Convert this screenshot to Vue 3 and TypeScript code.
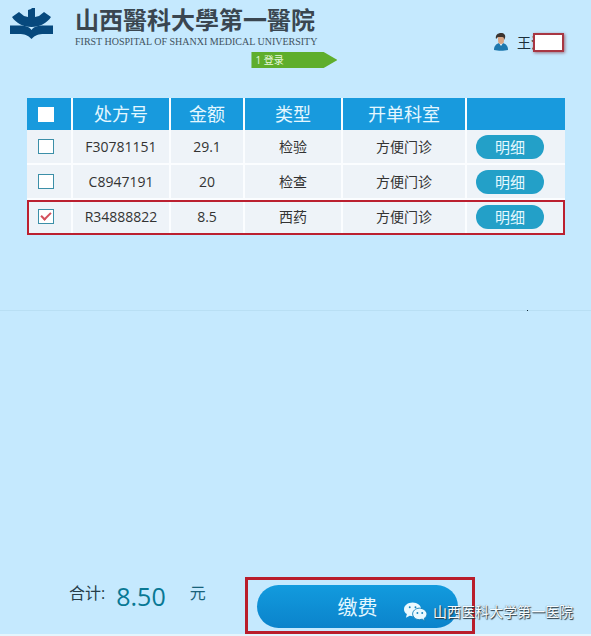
<script setup lang="ts">
import { computed, ref } from 'vue'

interface Prescription {
  id: string
  amount: number
  kind: string
  department: string
  selected: boolean
}

const items = ref<Prescription[]>([
  { id: 'F30781151', amount: 29.1, kind: '检验', department: '方便门诊', selected: false },
  { id: 'C8947191', amount: 20, kind: '检查', department: '方便门诊', selected: false },
  { id: 'R34888822', amount: 8.5, kind: '西药', department: '方便门诊', selected: true },
])

const total = computed(() =>
  items.value.filter((i) => i.selected).reduce((sum, i) => sum + i.amount, 0).toFixed(2),
)

const allSelected = computed({
  get: () => items.value.every((i) => i.selected),
  set: (value: boolean) => items.value.forEach((i) => (i.selected = value)),
})
</script>

<template>
  <div class="page">
    <header class="top">
      <svg class="logo" viewBox="0 0 44 32" aria-hidden="true">
        <path d="M18 2l3-1 1-1 3 0v9l4-1 5-4 7 5c-4 6-11 10-19.500 10S6 15 2 9l7-5 5 4 4 1z" />
        <path d="M0 17.500h9c6 0 10 1 12.500 4.500 2.500-3.500 6.500-4.500 12.500-4.500h9V26h-9c-5 0-9 1-12.500 5-3.500-4-7.500-5-12.500-5H0z" />
      </svg>
      <div class="brand">
        <h1 class="name">山西醫科大學第一醫院</h1>
        <p class="english">FIRST HOSPITAL OF SHANXI MEDICAL UNIVERSITY</p>
        <div class="step">1 登录</div>
      </div>
      <div class="user">
        <svg class="avatar" viewBox="0 0 16 18" aria-hidden="true">
          <path class="coat" d="M1 17c0-4 2-6 5-7h4c3 1 5 3 5 7-4 1-10 1-14 0z" />
          <path class="shirt" d="M6 10l2 3 2-3z" />
          <path class="face" d="M5 3h6v4c0 3-1 4-3 4s-3-1-3-4z" />
          <path class="hair" d="M3 6C2 2 5 0 8 0s5 2 4 5l-1 2c0-2 0-3-2-3L5 4z" />
        </svg>
        <span class="person">王洪</span>
        <span class="mask"></span>
      </div>
    </header>

    <main class="list">
      <table>
        <colgroup>
          <col class="c-check" />
          <col class="c-id" />
          <col class="c-amount" />
          <col class="c-kind" />
          <col class="c-dept" />
          <col class="c-action" />
        </colgroup>
        <thead>
          <tr>
            <th><input v-model="allSelected" type="checkbox" aria-label="全选" /></th>
            <th>处方号</th>
            <th>金额</th>
            <th>类型</th>
            <th>开单科室</th>
            <th></th>
          </tr>
        </thead>
        <tbody>
          <tr v-for="item in items" :key="item.id" :class="{ chosen: item.selected }">
            <td><input v-model="item.selected" type="checkbox" :aria-label="item.id" /></td>
            <td>{{ item.id }}</td>
            <td>{{ item.amount }}</td>
            <td>{{ item.kind }}</td>
            <td>{{ item.department }}</td>
            <td class="action"><button type="button" class="detail">明细</button></td>
          </tr>
        </tbody>
      </table>
    </main>

    <footer class="bottom">
      <div class="total">
        <span class="label">合计:</span>
        <output class="sum">{{ total }}</output>
        <span class="unit">元</span>
      </div>
      <div class="pay-frame">
        <button type="button" class="pay">缴费</button>
      </div>
      <div class="account">
        <svg class="wechat" viewBox="0 0 24 20" aria-hidden="true">
          <path d="M9 0C4 0 0 3 0 7c0 2 1 4 3 5l-1 4 4-2 3 .5c5 0 9-3 9-7.200S14 0 9 0z" />
          <path class="front" d="M16 6c-4 0-7 3-7 6s3 6 7 6l3-.5 3 2-.8-3c2-1 2.800-3 2.800-4.500 0-3-4-6-8-6z" />
          <circle cx="6" cy="5" r="1" />
          <circle cx="12" cy="5" r="1" />
          <circle cx="14" cy="11" r="1" />
          <circle cx="19" cy="11" r="1" />
        </svg>
        <span>山西医科大学第一医院</span>
      </div>
    </footer>
  </div>
</template>

<style>
body {
  margin: 0;
  background: #c5e9fe;
}
</style>

<style scoped>
.page {
  box-sizing: border-box;
  display: flex;
  flex-direction: column;
  min-height: 100vh;
  border-bottom: 2px solid #e4f5fd;
  background:
    linear-gradient(#102a38, #102a38) 527px 310px / 1px 1px no-repeat,
    linear-gradient(#b9dff4, #b9dff4) 0 310px / 100% 1px no-repeat,
    #c5e9fe;
  color: #333;
  font-family: "Open Sans", "Noto Sans CJK SC", sans-serif;
  font-size: 14px;
}

.top {
  display: flex;
  align-items: flex-start;
  height: 98px;
  padding: 0 27px 0 10px;
  box-sizing: border-box;
}

.logo {
  width: 44px;
  height: 32px;
  margin-top: 8px;
  fill: #07497d;
}

.brand {
  display: flex;
  flex-direction: column;
  margin-left: 21px;
  padding-top: 3px;
}

.name {
  margin: 0;
  color: #3a4650;
  font: 700 24px/32px "Noto Sans CJK TC", sans-serif;
}

.english {
  margin: 0;
  color: #3f5260;
  font: 10px/14px "Liberation Serif", serif;
  white-space: nowrap;
}

.step {
  align-self: flex-end;
  box-sizing: border-box;
  width: 86px;
  height: 16px;
  margin-top: 3px;
  margin-right: -20px;
  padding-left: 4px;
  background: #5fae2c;
  clip-path: polygon(0 0, 84% 0, 100% 50%, 84% 100%, 0 100%);
  color: #e9f9dc;
  font-size: 10px;
  line-height: 16px;
}

.user {
  display: flex;
  align-items: center;
  height: 20px;
  margin-top: 32px;
  margin-left: auto;
  color: #1c2e3a;
}

.avatar {
  width: 16px;
  height: 18px;
  margin-right: 8px;
}

.person {
  width: 28px;
  white-space: nowrap;
}

.coat { fill: #1d78ae; }
.shirt { fill: #e6f2f8; }
.face { fill: #d9a584; }
.hair { fill: #3b3430; }

.mask {
  box-sizing: border-box;
  width: 31px;
  height: 19px;
  margin-left: -12px;
  border: 2px solid #a83743;
  background: #fff;
  box-shadow: 1px 1px 3px #9c7080;
}

.list {
  flex: 1;
  padding: 0 26px 0 27px;
}

table {
  width: 100%;
  border-collapse: separate;
  border-spacing: 0;
  table-layout: fixed;
}

.c-check { width: 44px; }
.c-id { width: 98px; }
.c-amount { width: 74px; }
.c-kind { width: 98px; }
.c-dept { width: 124px; }
.c-action { width: 100px; }

th,
td {
  box-sizing: border-box;
  padding: 0;
  border-left: 2px solid #fbfdff;
  text-align: center;
}

th {
  height: 32px;
  background: #189add;
  color: #e4f7ff;
  font-size: 18px;
  font-weight: 400;
  line-height: 24px;
}

td {
  height: 35px;
  border-bottom: 2px solid #fbfdff;
  background: #eef3f8;
  line-height: 20px;
}

th:first-child,
td:first-child {
  border-left: 0;
}

.chosen {
  outline: 2px solid #bb2030;
  outline-offset: -2px;
}

input {
  display: block;
  appearance: none;
  box-sizing: border-box;
  width: 16px;
  height: 15px;
  margin: 0 auto 0 11px;
  border: 1px solid #3c8fa8;
  background: #fff;
}

th input { border-color: #fff; }

input:checked::before {
  content: "";
  display: block;
  box-sizing: border-box;
  width: 10px;
  height: 6px;
  margin: 2px;
  border: solid #d4505c;
  border-width: 0 0 2px 2px;
  transform: rotate(-45deg);
}

.action {
  padding-left: 9px;
  text-align: left;
}

.detail {
  display: block;
  width: 68px;
  height: 24px;
  padding: 0;
  border: 0;
  border-radius: 12px;
  background: #23a0c8;
  color: #e5f9ff;
  font: 15px/24px "Noto Sans CJK SC", sans-serif;
}

.bottom {
  position: relative;
  display: flex;
  align-items: flex-start;
  padding-left: 69px;
}

.total {
  display: flex;
  align-items: flex-start;
  width: 176px;
}

.label {
  margin-top: 4px;
  color: #263d49;
  font-size: 16px;
  line-height: 24px;
}

.sum {
  margin-top: 3px;
  margin-left: 11px;
  color: #087894;
  font-size: 25px;
  line-height: 32px;
}

.unit {
  margin-top: 4px;
  margin-left: 24px;
  color: #18627a;
  font-size: 16px;
  line-height: 24px;
}

.pay-frame {
  padding: 5px 14px 3px 9px;
  border: 3px solid #b91d2b;
}

.pay {
  display: block;
  width: 201px;
  height: 43px;
  padding: 0;
  border: 0;
  border-radius: 22px;
  background: linear-gradient(#129bde, #0b83cb);
  color: #e2f7ff;
  font: 20px/43px "Noto Sans CJK SC", sans-serif;
}

.account {
  position: absolute;
  right: 18px;
  bottom: 12px;
  display: flex;
  align-items: center;
  gap: 6px;
  color: #f7fcff;
  font-size: 14px;
  line-height: 20px;
  text-shadow: 1px 1px 1px #263640, 0 0 1px #4c616e;
}

.wechat {
  width: 23px;
  height: 20px;
  fill: #eaf9ff;
}

.wechat .front {
  stroke: #1683bb;
  stroke-width: 1;
}

.wechat circle { fill: #1683bb; }
</style>
